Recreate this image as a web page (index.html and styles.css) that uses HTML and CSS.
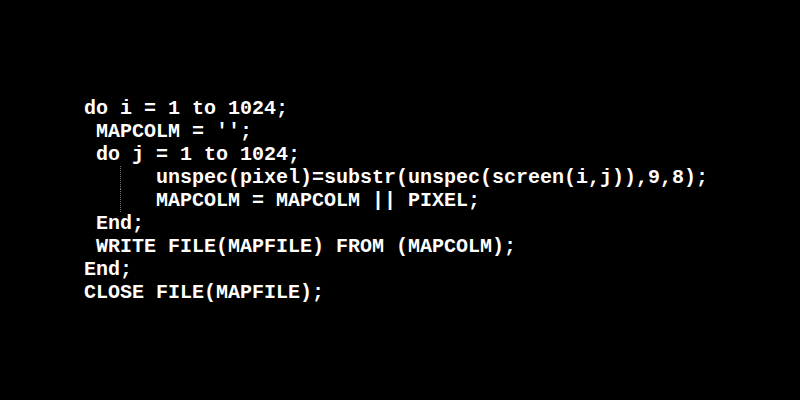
FILE: index.html
```html
<!DOCTYPE html>
<html>
<head>
<meta charset="utf-8">
<link rel="stylesheet" href="styles.css">
</head>
<body>
<main class="screen">
<pre class="code"><span class="line">do i = 1 to 1024;</span>
<span class="line"> MAPCOLM = '';</span>
<span class="line"> do j = 1 to 1024;</span>
<span class="line">   <span class="guide">   </span>unspec(pixel)=substr(unspec(screen(i,j)),9,8);</span>
<span class="line">   <span class="guide">   </span>MAPCOLM = MAPCOLM || PIXEL;</span>
<span class="line"> End;</span>
<span class="line"> WRITE FILE(MAPFILE) FROM (MAPCOLM);</span>
<span class="line">End;</span>
<span class="line">CLOSE FILE(MAPFILE);</span></pre>
</main>
</body>
</html>
```

FILE: styles.css
```css
html, body {
  margin: 0;
  padding: 0;
  background: #000;
}
.screen {
  width: 800px;
  height: 400px;
  background: #000;
  box-sizing: border-box;
  padding: 97px 0 0 84px;
}
.code {
  margin: 0;
  font-family: "Liberation Mono", "Courier New", monospace;
  font-weight: bold;
  font-size: 20px;
  line-height: 23px;
  color: #fff;
}
.guide {
  display: inline-block;
  background-image: repeating-linear-gradient(to bottom, #777 0 1px, transparent 1px 2px);
  background-size: 1px 100%;
  background-repeat: no-repeat;
  background-position: left top;
}
```
